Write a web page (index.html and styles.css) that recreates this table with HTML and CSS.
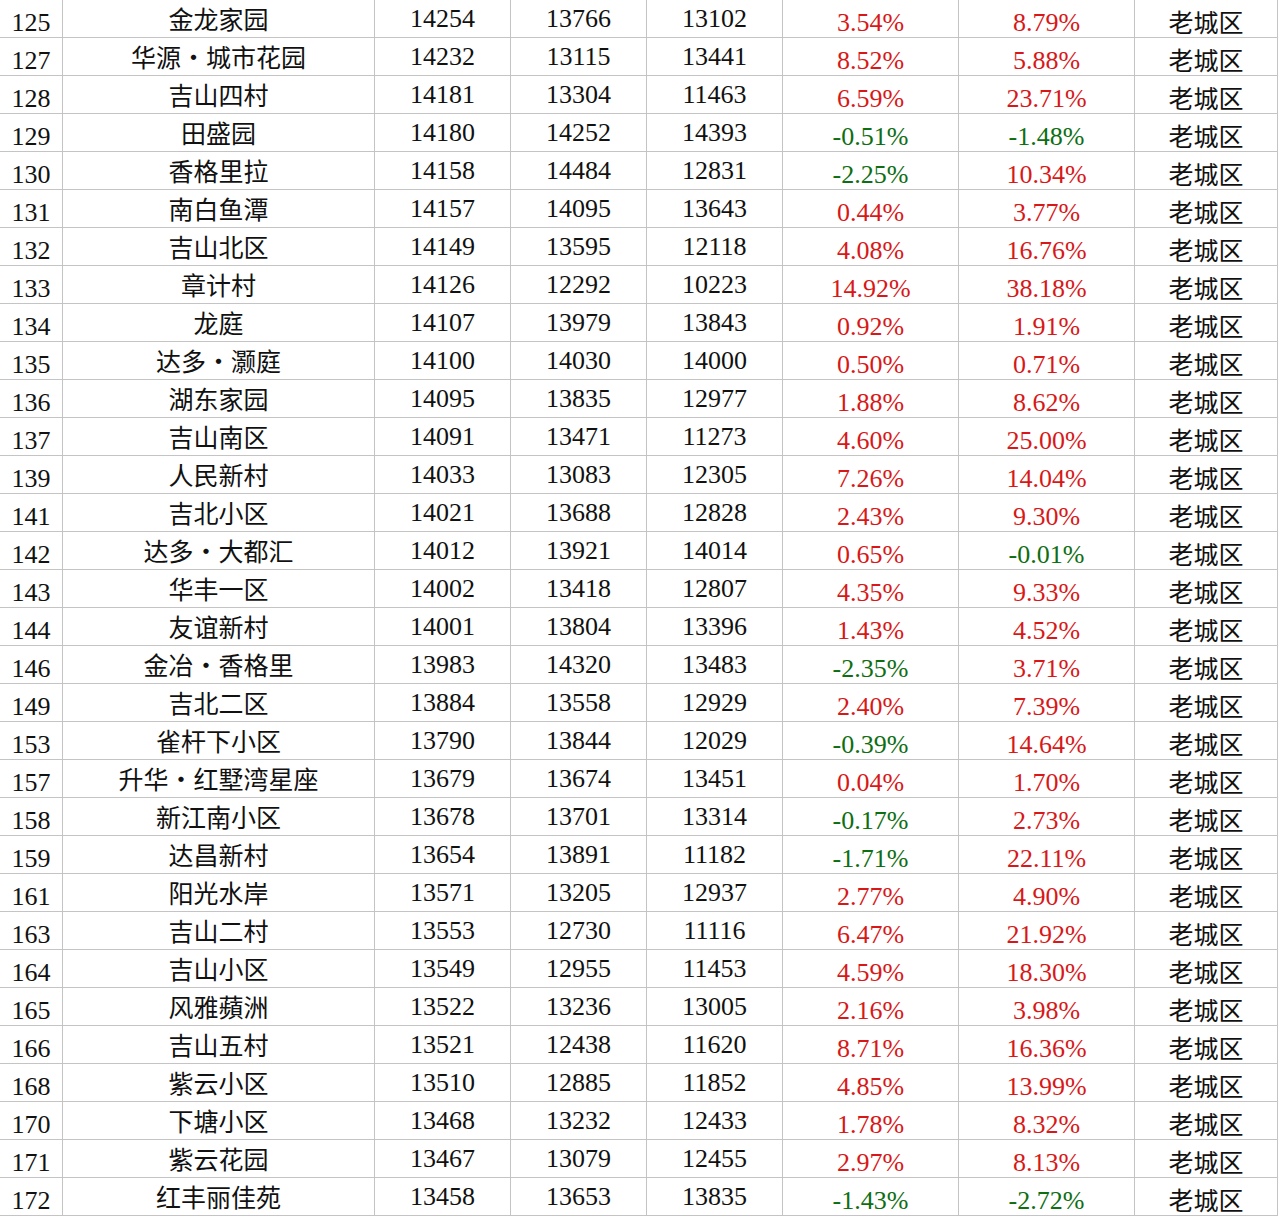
FILE: index.html
```html
<!DOCTYPE html>
<html lang="zh-CN">
<head>
<meta charset="utf-8">
<title>小区房价表</title>
<link rel="stylesheet" href="styles.css">
</head>
<body>
<div class="sheet">
<div class="row"><div class="c no">125</div><div class="c name">金龙家园</div><div class="c num">14254</div><div class="c num">13766</div><div class="c num">13102</div><div class="c pct up">3.54%</div><div class="c pct up">8.79%</div><div class="c dist">老城区</div></div>
<div class="row"><div class="c no">127</div><div class="c name">华源・城市花园</div><div class="c num">14232</div><div class="c num">13115</div><div class="c num">13441</div><div class="c pct up">8.52%</div><div class="c pct up">5.88%</div><div class="c dist">老城区</div></div>
<div class="row"><div class="c no">128</div><div class="c name">吉山四村</div><div class="c num">14181</div><div class="c num">13304</div><div class="c num">11463</div><div class="c pct up">6.59%</div><div class="c pct up">23.71%</div><div class="c dist">老城区</div></div>
<div class="row"><div class="c no">129</div><div class="c name">田盛园</div><div class="c num">14180</div><div class="c num">14252</div><div class="c num">14393</div><div class="c pct down">-0.51%</div><div class="c pct down">-1.48%</div><div class="c dist">老城区</div></div>
<div class="row"><div class="c no">130</div><div class="c name">香格里拉</div><div class="c num">14158</div><div class="c num">14484</div><div class="c num">12831</div><div class="c pct down">-2.25%</div><div class="c pct up">10.34%</div><div class="c dist">老城区</div></div>
<div class="row"><div class="c no">131</div><div class="c name">南白鱼潭</div><div class="c num">14157</div><div class="c num">14095</div><div class="c num">13643</div><div class="c pct up">0.44%</div><div class="c pct up">3.77%</div><div class="c dist">老城区</div></div>
<div class="row"><div class="c no">132</div><div class="c name">吉山北区</div><div class="c num">14149</div><div class="c num">13595</div><div class="c num">12118</div><div class="c pct up">4.08%</div><div class="c pct up">16.76%</div><div class="c dist">老城区</div></div>
<div class="row"><div class="c no">133</div><div class="c name">章计村</div><div class="c num">14126</div><div class="c num">12292</div><div class="c num">10223</div><div class="c pct up">14.92%</div><div class="c pct up">38.18%</div><div class="c dist">老城区</div></div>
<div class="row"><div class="c no">134</div><div class="c name">龙庭</div><div class="c num">14107</div><div class="c num">13979</div><div class="c num">13843</div><div class="c pct up">0.92%</div><div class="c pct up">1.91%</div><div class="c dist">老城区</div></div>
<div class="row"><div class="c no">135</div><div class="c name">达多・灏庭</div><div class="c num">14100</div><div class="c num">14030</div><div class="c num">14000</div><div class="c pct up">0.50%</div><div class="c pct up">0.71%</div><div class="c dist">老城区</div></div>
<div class="row"><div class="c no">136</div><div class="c name">湖东家园</div><div class="c num">14095</div><div class="c num">13835</div><div class="c num">12977</div><div class="c pct up">1.88%</div><div class="c pct up">8.62%</div><div class="c dist">老城区</div></div>
<div class="row"><div class="c no">137</div><div class="c name">吉山南区</div><div class="c num">14091</div><div class="c num">13471</div><div class="c num">11273</div><div class="c pct up">4.60%</div><div class="c pct up">25.00%</div><div class="c dist">老城区</div></div>
<div class="row"><div class="c no">139</div><div class="c name">人民新村</div><div class="c num">14033</div><div class="c num">13083</div><div class="c num">12305</div><div class="c pct up">7.26%</div><div class="c pct up">14.04%</div><div class="c dist">老城区</div></div>
<div class="row"><div class="c no">141</div><div class="c name">吉北小区</div><div class="c num">14021</div><div class="c num">13688</div><div class="c num">12828</div><div class="c pct up">2.43%</div><div class="c pct up">9.30%</div><div class="c dist">老城区</div></div>
<div class="row"><div class="c no">142</div><div class="c name">达多・大都汇</div><div class="c num">14012</div><div class="c num">13921</div><div class="c num">14014</div><div class="c pct up">0.65%</div><div class="c pct down">-0.01%</div><div class="c dist">老城区</div></div>
<div class="row"><div class="c no">143</div><div class="c name">华丰一区</div><div class="c num">14002</div><div class="c num">13418</div><div class="c num">12807</div><div class="c pct up">4.35%</div><div class="c pct up">9.33%</div><div class="c dist">老城区</div></div>
<div class="row"><div class="c no">144</div><div class="c name">友谊新村</div><div class="c num">14001</div><div class="c num">13804</div><div class="c num">13396</div><div class="c pct up">1.43%</div><div class="c pct up">4.52%</div><div class="c dist">老城区</div></div>
<div class="row"><div class="c no">146</div><div class="c name">金冶・香格里</div><div class="c num">13983</div><div class="c num">14320</div><div class="c num">13483</div><div class="c pct down">-2.35%</div><div class="c pct up">3.71%</div><div class="c dist">老城区</div></div>
<div class="row"><div class="c no">149</div><div class="c name">吉北二区</div><div class="c num">13884</div><div class="c num">13558</div><div class="c num">12929</div><div class="c pct up">2.40%</div><div class="c pct up">7.39%</div><div class="c dist">老城区</div></div>
<div class="row"><div class="c no">153</div><div class="c name">雀杆下小区</div><div class="c num">13790</div><div class="c num">13844</div><div class="c num">12029</div><div class="c pct down">-0.39%</div><div class="c pct up">14.64%</div><div class="c dist">老城区</div></div>
<div class="row"><div class="c no">157</div><div class="c name">升华・红墅湾星座</div><div class="c num">13679</div><div class="c num">13674</div><div class="c num">13451</div><div class="c pct up">0.04%</div><div class="c pct up">1.70%</div><div class="c dist">老城区</div></div>
<div class="row"><div class="c no">158</div><div class="c name">新江南小区</div><div class="c num">13678</div><div class="c num">13701</div><div class="c num">13314</div><div class="c pct down">-0.17%</div><div class="c pct up">2.73%</div><div class="c dist">老城区</div></div>
<div class="row"><div class="c no">159</div><div class="c name">达昌新村</div><div class="c num">13654</div><div class="c num">13891</div><div class="c num">11182</div><div class="c pct down">-1.71%</div><div class="c pct up">22.11%</div><div class="c dist">老城区</div></div>
<div class="row"><div class="c no">161</div><div class="c name">阳光水岸</div><div class="c num">13571</div><div class="c num">13205</div><div class="c num">12937</div><div class="c pct up">2.77%</div><div class="c pct up">4.90%</div><div class="c dist">老城区</div></div>
<div class="row"><div class="c no">163</div><div class="c name">吉山二村</div><div class="c num">13553</div><div class="c num">12730</div><div class="c num">11116</div><div class="c pct up">6.47%</div><div class="c pct up">21.92%</div><div class="c dist">老城区</div></div>
<div class="row"><div class="c no">164</div><div class="c name">吉山小区</div><div class="c num">13549</div><div class="c num">12955</div><div class="c num">11453</div><div class="c pct up">4.59%</div><div class="c pct up">18.30%</div><div class="c dist">老城区</div></div>
<div class="row"><div class="c no">165</div><div class="c name">风雅蘋洲</div><div class="c num">13522</div><div class="c num">13236</div><div class="c num">13005</div><div class="c pct up">2.16%</div><div class="c pct up">3.98%</div><div class="c dist">老城区</div></div>
<div class="row"><div class="c no">166</div><div class="c name">吉山五村</div><div class="c num">13521</div><div class="c num">12438</div><div class="c num">11620</div><div class="c pct up">8.71%</div><div class="c pct up">16.36%</div><div class="c dist">老城区</div></div>
<div class="row"><div class="c no">168</div><div class="c name">紫云小区</div><div class="c num">13510</div><div class="c num">12885</div><div class="c num">11852</div><div class="c pct up">4.85%</div><div class="c pct up">13.99%</div><div class="c dist">老城区</div></div>
<div class="row"><div class="c no">170</div><div class="c name">下塘小区</div><div class="c num">13468</div><div class="c num">13232</div><div class="c num">12433</div><div class="c pct up">1.78%</div><div class="c pct up">8.32%</div><div class="c dist">老城区</div></div>
<div class="row"><div class="c no">171</div><div class="c name">紫云花园</div><div class="c num">13467</div><div class="c num">13079</div><div class="c num">12455</div><div class="c pct up">2.97%</div><div class="c pct up">8.13%</div><div class="c dist">老城区</div></div>
<div class="row"><div class="c no">172</div><div class="c name">红丰丽佳苑</div><div class="c num">13458</div><div class="c num">13653</div><div class="c num">13835</div><div class="c pct down">-1.43%</div><div class="c pct down">-2.72%</div><div class="c dist">老城区</div></div>
</div>
</body>
</html>
```

FILE: styles.css
```css
html, body {
  margin: 0;
  padding: 0;
  background: #ffffff;
}
.sheet {
  display: flex;
  flex-direction: column;
  width: 1278px;
}
.row {
  display: grid;
  grid-template-columns: 63px 312px 136px 136px 136px 176px 176px 143px;
  height: 38px;
}
.c {
  box-sizing: border-box;
  height: 38px;
  border-right: 1px solid #c4c4c4;
  border-bottom: 1px solid #c4c4c4;
  display: flex;
  align-items: flex-start;
  justify-content: center;
  color: #111;
  white-space: nowrap;
  line-height: 30px;
}
.no, .num, .pct {
  font-family: "Liberation Serif", "DejaVu Serif", serif;
  font-size: 26px;
}
.no {
  padding-top: 8px;
}
.num {
  padding-top: 4px;
}
.pct {
  padding-top: 8px;
}
.name, .dist {
  font-family: "Noto Sans CJK SC", sans-serif;
  font-size: 25px;
}
.name {
  padding-top: 3px;
}
.dist {
  padding-top: 6px;
}
.up {
  color: #d81818;
}
.down {
  color: #0e6e12;
}
```
